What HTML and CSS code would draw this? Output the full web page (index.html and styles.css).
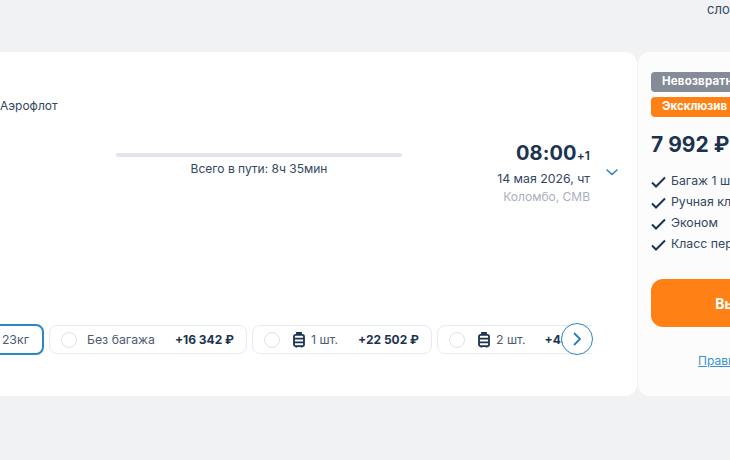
FILE: index.html
```html
<!DOCTYPE html>
<html lang="ru">
<head>
  <meta charset="UTF-8">
  <title>Билет</title>
  <link rel="stylesheet" href="styles.css">
</head>
<body>

<div class="page">
  <div class="top-bar"><span class="top-text">сложный маршрут</span></div>

  <div class="ticket">
    <div class="flight">
      <div class="airline">Аэрофлот</div>

      <div class="route">
        <div class="duration">
          <div class="duration-line"></div>
          <div class="duration-text">Всего в пути: 8ч 35мин</div>
        </div>
        <div class="arrival">
          <div class="arrival-time">08:00<span class="plus-day">+1</span></div>
          <div class="arrival-date">14 мая 2026, чт</div>
          <div class="arrival-city">Коломбо, CMB</div>
        </div>
        <svg class="route-toggle" width="12" height="7" viewBox="0 0 12 7"><path d="M1 1l5 4.5L11 1" fill="none" stroke="#2a86c4" stroke-width="1.6" stroke-linecap="round" stroke-linejoin="round"/></svg>
      </div>

      <div class="options">
        <div class="options-row">
          <div class="chip chip-active"><span class="chip-label">23кг</span></div>
          <div class="chip chip-wide">
            <span class="radio"></span>
            <span class="chip-label">Без багажа</span>
            <span class="chip-price">+16 342 ₽</span>
          </div>
          <div class="chip chip-bag">
            <span class="radio"></span>
            <svg class="bag" width="12" height="16" viewBox="0 0 12 16"><path d="M4 2.6V1h4v1.6M2.6 2.8h6.8c.9 0 1.6.7 1.6 1.6v8.2c0 .9-.7 1.6-1.6 1.6H2.6c-.9 0-1.6-.7-1.6-1.6V4.4c0-.9.7-1.6 1.6-1.6zM1 6.6h10M1 10.4h10M3.4 14.2v1.2M8.6 14.2v1.2" fill="none" stroke="#1c3350" stroke-width="1.8"/></svg>
            <span class="chip-label">1 шт.</span>
            <span class="chip-price">+22 502 ₽</span>
          </div>
          <div class="chip chip-bag">
            <span class="radio"></span>
            <svg class="bag" width="12" height="16" viewBox="0 0 12 16"><path d="M4 2.6V1h4v1.6M2.6 2.8h6.8c.9 0 1.6.7 1.6 1.6v8.2c0 .9-.7 1.6-1.6 1.6H2.6c-.9 0-1.6-.7-1.6-1.6V4.4c0-.9.7-1.6 1.6-1.6zM1 6.6h10M1 10.4h10M3.4 14.2v1.2M8.6 14.2v1.2" fill="none" stroke="#1c3350" stroke-width="1.8"/></svg>
            <span class="chip-label">2 шт.</span>
            <span class="chip-price">+43 120 ₽</span>
          </div>
        </div>
        <div class="next-btn">
          <svg width="9" height="14" viewBox="0 0 9 14"><path d="M1.5 1.5L7 7l-5.5 5.5" fill="none" stroke="#2a7fbd" stroke-width="1.8" stroke-linecap="round" stroke-linejoin="round"/></svg>
        </div>
      </div>
    </div>

    <div class="price-panel">
      <div class="tag tag-grey">Невозвратный</div>
      <div class="tag tag-orange">Эксклюзив</div>
      <div class="price">7 992 ₽</div>

      <ul class="features">
        <li><svg width="15" height="12" viewBox="0 0 15 12"><path d="M1 6.5L5 10.5 14 1.5" fill="none" stroke="#1c3350" stroke-width="2"/></svg>Багаж 1 шт.</li>
        <li><svg width="15" height="12" viewBox="0 0 15 12"><path d="M1 6.5L5 10.5 14 1.5" fill="none" stroke="#1c3350" stroke-width="2"/></svg>Ручная кладь</li>
        <li><svg width="15" height="12" viewBox="0 0 15 12"><path d="M1 6.5L5 10.5 14 1.5" fill="none" stroke="#1c3350" stroke-width="2"/></svg>Эконом</li>
        <li><svg width="15" height="12" viewBox="0 0 15 12"><path d="M1 6.5L5 10.5 14 1.5" fill="none" stroke="#1c3350" stroke-width="2"/></svg>Класс перевозки</li>
      </ul>

      <button class="buy-btn">Выбрать</button>
      <div class="rules"><a href="#">Правила тарифа</a></div>
    </div>
  </div>
</div>

</body>
</html>
```

FILE: styles.css
```css
html, body { margin: 0; height: 100%; }
body { background: #f0f2f4; font-family: Inter, "Noto Sans", sans-serif; color: #1c3350; overflow: hidden; }

.page { width: 730px; height: 460px; overflow: hidden; }

.top-bar { height: 52px; padding: 1px 0 0 707px; box-sizing: border-box; white-space: nowrap; font-size: 13px; line-height: 16px; color: #33475f; }

.ticket { display: flex; width: 854px; height: 344px; }

.flight { flex: none; width: 637px; background: #fff; border-radius: 0 12px 12px 0; box-sizing: border-box; padding-top: 45px; }
.airline { font-size: 12px; line-height: 17px; color: #33475f; }

.route { display: flex; align-items: flex-start; margin-top: 26px; height: 184px; }
.duration { width: 286px; margin: 13px 0 0 116px; text-align: center; }
.duration-line { height: 4px; border-radius: 2px; background: #e3e5ee; }
.duration-text { font-size: 12px; line-height: 16px; margin-top: 4px; color: #33475f; }

.arrival { width: 188px; text-align: right; }
.arrival-time { font-size: 20px; line-height: 26px; font-weight: 700; letter-spacing: 0.1px; }
.plus-day { font-size: 12px; font-weight: 600; }
.arrival-date { font-size: 12.3px; line-height: 16px; margin-top: 2px; color: #33475f; }
.arrival-city { font-size: 12px; line-height: 16px; margin-top: 2px; color: #a9afbd; }
.route-toggle { margin: 29px 0 0 16px; }

.options { position: relative; width: 592px; }
.options-row { display: flex; align-items: center; gap: 5px; overflow: hidden; }
.chip { flex: none; display: flex; align-items: center; height: 27px; border: 1px solid #e6eaf2; border-radius: 8px; font-size: 12.3px; padding: 0 12px 0 11px; white-space: nowrap; }
.chip-active { width: 87px; margin-left: -60px; border: 2px solid #2a86c4; justify-content: flex-end; padding: 0 13px 0 0; }
.chip-wide { width: 173px; }
.chip-bag { width: 155px; }
.radio { flex: none; width: 14px; height: 14px; border: 1px solid #dfe2e8; border-radius: 50%; margin-right: 10px; }
.bag { flex: none; margin: 0 6px 0 3px; }
.chip-label { color: #4b5c72; }
.chip-price { margin-left: auto; font-size: 12px; font-weight: 700; color: #1c3350; }

.next-btn { position: absolute; right: -1px; top: -1px; width: 30px; height: 30px; border: 1px solid #2a86c4; border-radius: 50%; background: #fff; display: flex; align-items: center; justify-content: center; }

.price-panel { flex: none; width: 216px; margin-left: 1px; padding: 20px 13px 0; box-sizing: border-box; background: #fcfcfd; border-radius: 12px 0 0 12px; }
.tag { width: 200px; height: 20px; line-height: 19px; border-radius: 4px; color: #fff; font-size: 11.5px; font-weight: 700; padding-left: 11px; box-sizing: border-box; white-space: nowrap; letter-spacing: 0.2px; }
.tag-grey { background: #858b97; }
.tag-orange { background: #ff8014; margin-top: 5px; letter-spacing: 0; }
.price { font-size: 21px; line-height: 26px; font-weight: 700; margin-top: 15px; }

.features { list-style: none; margin: 12px 0 0; padding: 0; font-size: 12.3px; color: #33475f; white-space: nowrap; }
.features li { display: flex; align-items: center; height: 21px; }
.features svg { flex: none; margin: 2px 5px 0 0; }

.buy-btn { display: block; width: 190px; height: 48px; margin-top: 25px; border: 0; border-radius: 12px; background: #ff8014; color: #fff; font-family: inherit; font-size: 14px; font-weight: 700; }
.rules { margin-top: 26px; text-align: center; font-size: 12px; }
.rules a { color: #3a93d0; }
```
